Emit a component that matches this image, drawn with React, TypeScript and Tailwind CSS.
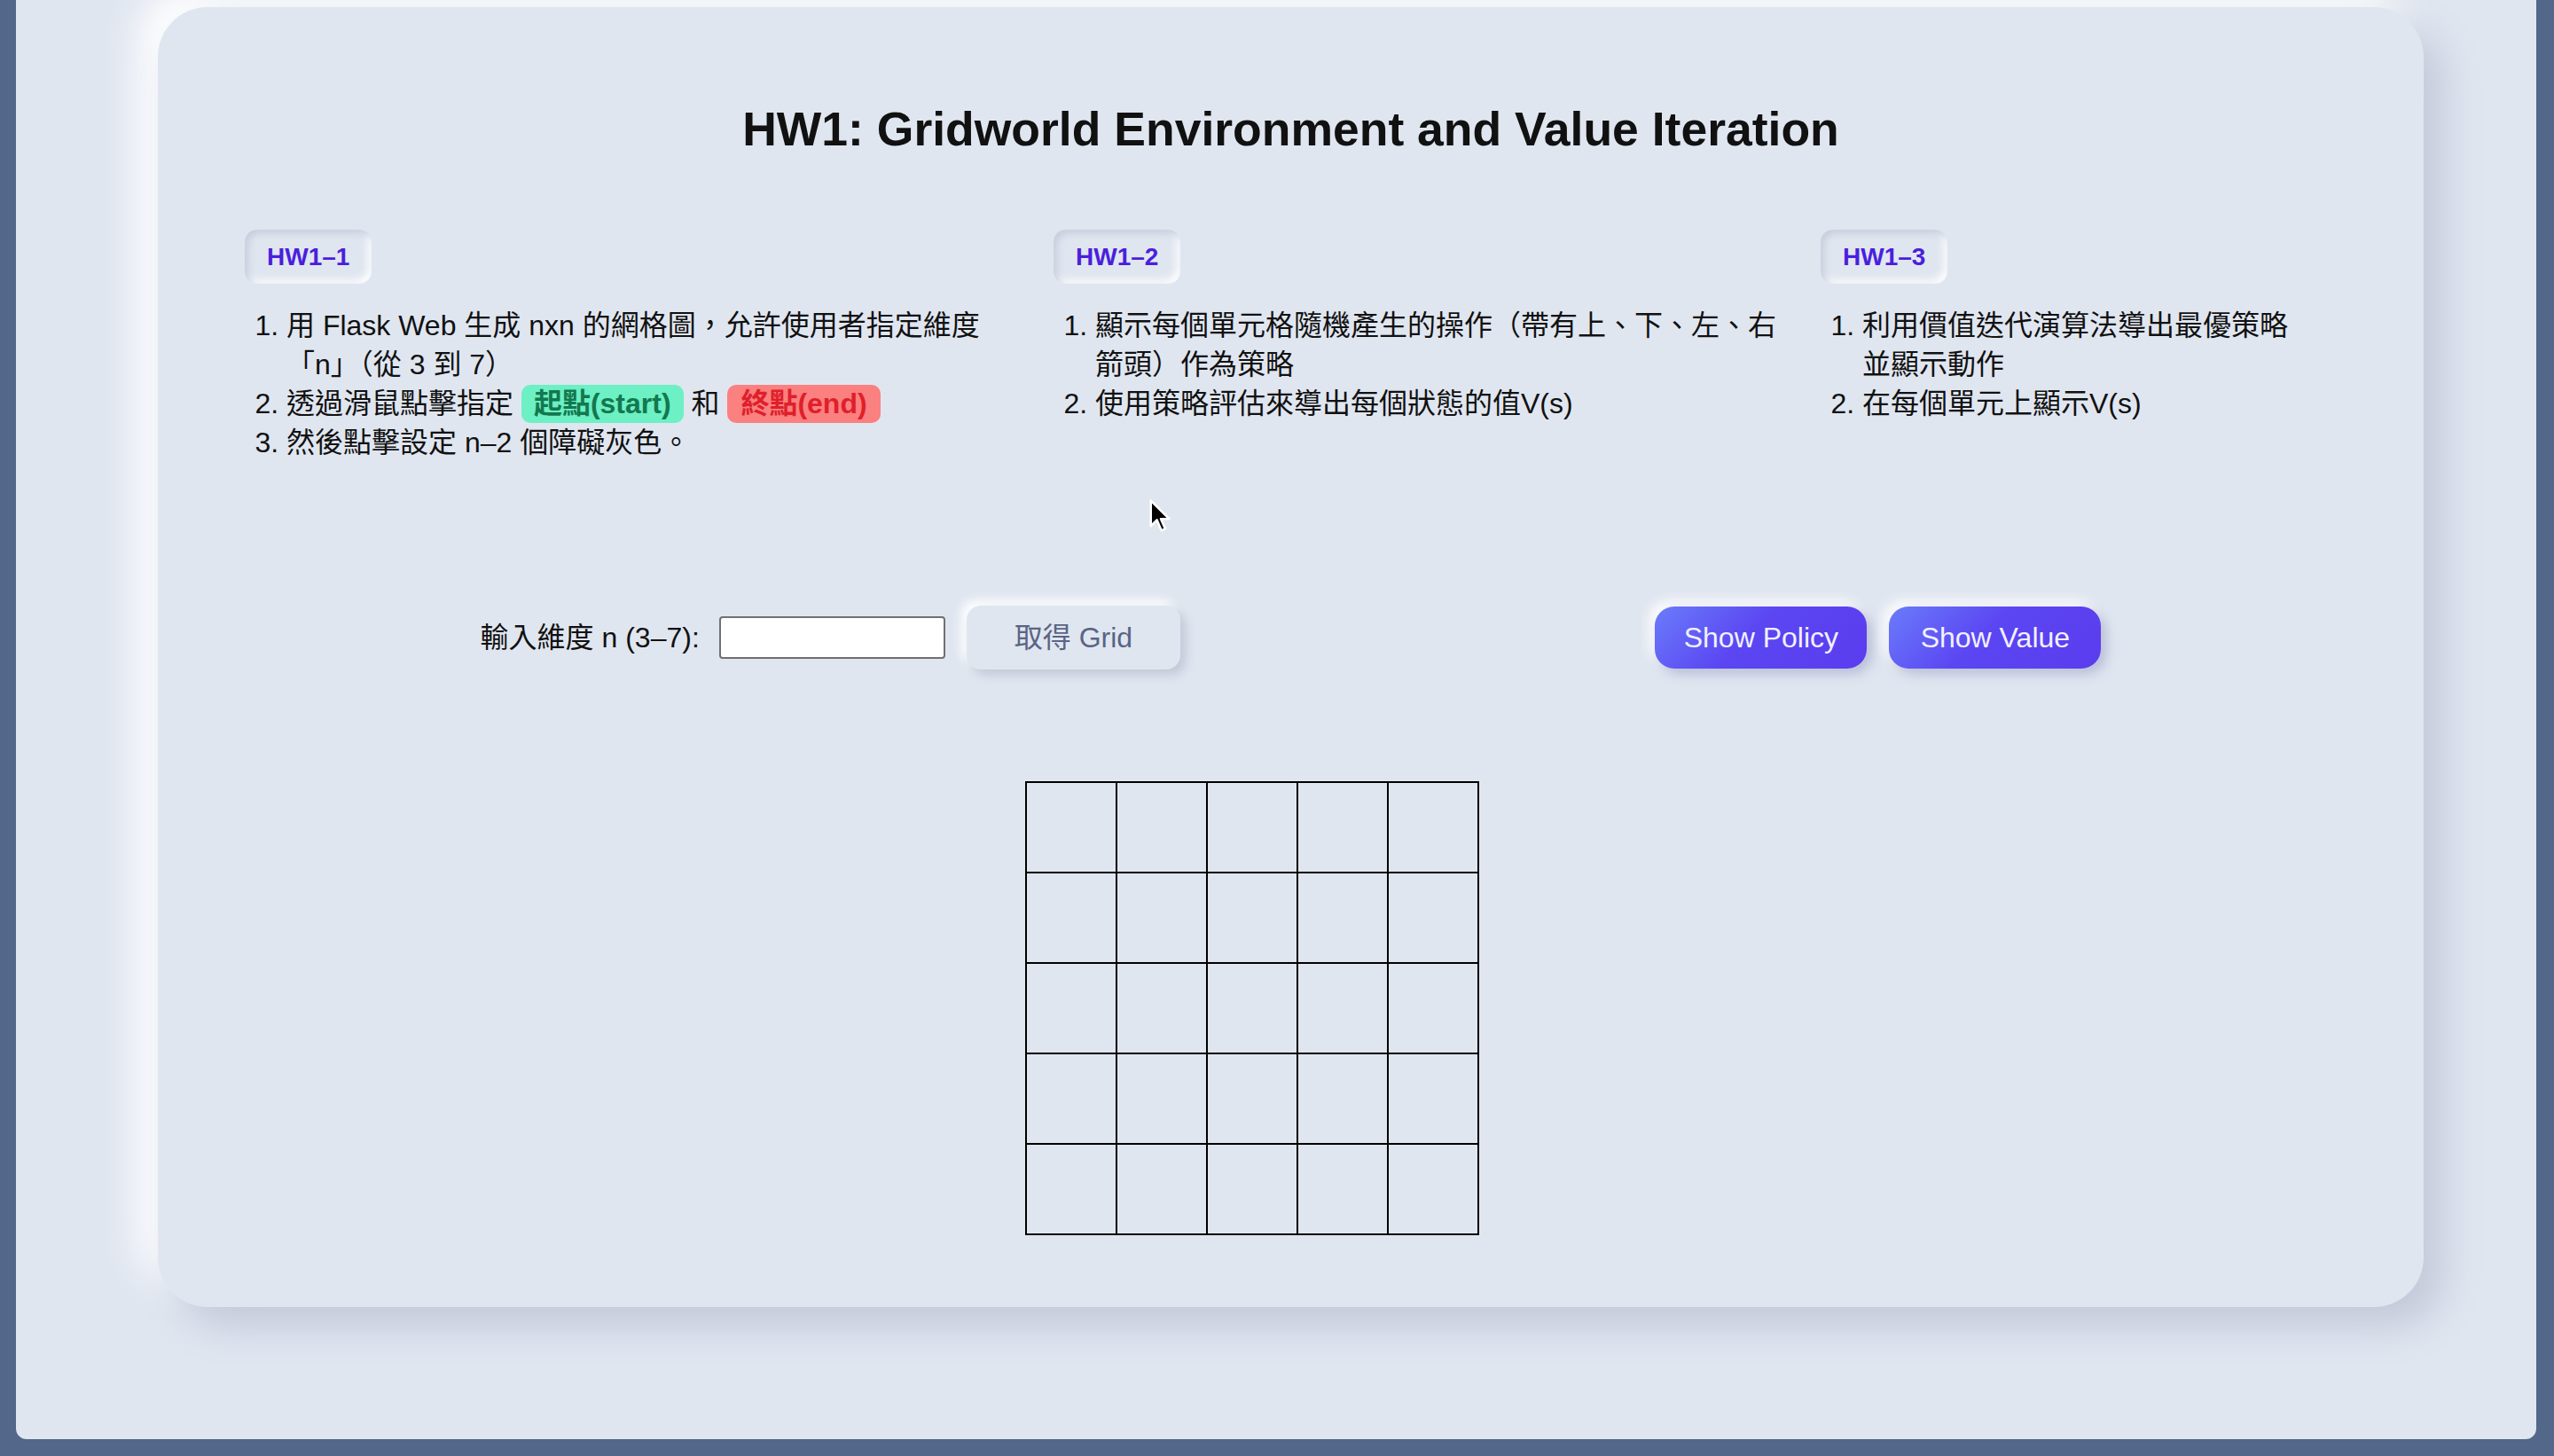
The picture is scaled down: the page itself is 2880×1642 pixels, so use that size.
const FONT = "font-['Liberation_Sans','Noto_Sans_CJK_TC',sans-serif]";

function Badge({ label }: { label: string }) {
  return (
    <div className="inline-block rounded-[14px] px-[25px] py-[14px] text-[28px] leading-[33px] font-bold text-[#4a1fdc] shadow-[inset_4px_4px_8px_#c6cedc,inset_-4px_-4px_8px_#ffffff]">
      {label}
    </div>
  );
}

function Cursor() {
  return (
    <svg
      className="absolute left-[1277px] top-[562px]"
      width="28"
      height="40"
      viewBox="0 0 22 32"
    >
      <path
        d="M2 2 L2 25 L7.5 19.5 L11.5 29 L15 27.5 L11 18.5 L18.5 18.5 Z"
        fill="#000"
        stroke="#fff"
        strokeWidth="2"
        strokeLinejoin="round"
      />
    </svg>
  );
}

export default function App(): JSX.Element {
  const cells = Array.from({ length: 25 }, (_, i) => i);

  return (
    <div className={`w-[2880px] h-[1642px] bg-[#52678a] overflow-hidden ${FONT}`}>
      <div className="relative ml-[18px] w-[2842px] h-[1623px] rounded-b-[12px] bg-[#e0e6f0] pt-[8px]">
        {/* Card */}
        <div className="ml-[160px] w-[2555px] h-[1466px] rounded-[56px] bg-[#e0e6f0] px-[98px] pt-[107px] shadow-[22px_22px_44px_#c2c9d9,-22px_-22px_44px_#ffffff]">
          <h1 className="text-center text-[53.5px] leading-[61px] font-bold text-[#111]">
            HW1: Gridworld Environment and Value Iteration
          </h1>

          {/* Homework columns */}
          <div className="mt-[83px] flex items-start text-[32px] leading-[44px] text-[#111]">
            <div className="w-[843px]">
              <Badge label="HW1–1" />
              <ol className="mt-[25px] list-decimal pl-[47px]">
                <li>用 Flask Web 生成 nxn 的網格圖，允許使用者指定維度「n」（從 3 到 7）</li>
                <li>
                  透過滑鼠點擊指定{" "}
                  <span className="inline-block rounded-[10px] bg-[#6cf0c4] px-[14px] leading-[43px] font-bold text-[#13784f]">
                    起點(start)
                  </span>{" "}
                  和{" "}
                  <span className="inline-block rounded-[10px] bg-[#fb8080] px-[15px] leading-[43px] font-bold text-[#e01f2b]">
                    終點(end)
                  </span>
                </li>
                <li>然後點擊設定 n–2 個障礙灰色。</li>
              </ol>
            </div>

            <div className="ml-[69px] w-[827px]">
              <Badge label="HW1–2" />
              <ol className="mt-[25px] list-decimal pl-[47px]">
                <li>顯示每個單元格隨機產生的操作（帶有上、下、左、右箭頭）作為策略</li>
                <li>使用策略評估來導出每個狀態的值V(s)</li>
              </ol>
            </div>

            <div className="ml-[38px] w-[543px]">
              <Badge label="HW1–3" />
              <ol className="mt-[25px] list-decimal pl-[47px]">
                <li>利用價值迭代演算法導出最優策略並顯示動作</li>
                <li>在每個單元上顯示V(s)</li>
              </ol>
            </div>
          </div>

          {/* Controls */}
          <div className="mt-[162px] flex items-center justify-around text-[32px] leading-[44px]">
            <div className="flex items-center">
              <span className="text-[#111]">輸入維度 n (3–7):</span>
              <input
                type="text"
                className="ml-[22px] h-[48px] w-[255px] rounded-[4px] border-2 border-[#707070] bg-white"
              />
              <button className="ml-[24px] rounded-[16px] bg-[#e0e6f0] px-[54px] py-[14px] text-[#5a6485] shadow-[6px_6px_12px_#c1c8d7,-6px_-6px_12px_#ffffff]">
                取得 Grid
              </button>
            </div>
            <div className="ml-[4px] flex items-center gap-[25px]">
              <button className="w-[239px] rounded-[22px] bg-[linear-gradient(135deg,#6a7cfa,#5b46f2_45%,#5a3cee)] py-[13px] text-[#f2f0ff] shadow-[6px_6px_14px_#b6bdd6,-6px_-6px_14px_#ffffff]">
                Show Policy
              </button>
              <button className="w-[239px] rounded-[22px] bg-[linear-gradient(135deg,#6a7cfa,#5b46f2_45%,#5a3cee)] py-[13px] text-[#f2f0ff] shadow-[6px_6px_14px_#b6bdd6,-6px_-6px_14px_#ffffff]">
                Show Value
              </button>
            </div>
          </div>

          {/* Grid */}
          <div className="mt-[126px] ml-[880px] grid w-[512px] grid-cols-5 border-t-2 border-l-2 border-black">
            {cells.map((i) => (
              <div key={i} className="h-[102px] w-[102px] border-r-2 border-b-2 border-black" />
            ))}
          </div>
        </div>

        <Cursor />
      </div>
    </div>
  );
}
